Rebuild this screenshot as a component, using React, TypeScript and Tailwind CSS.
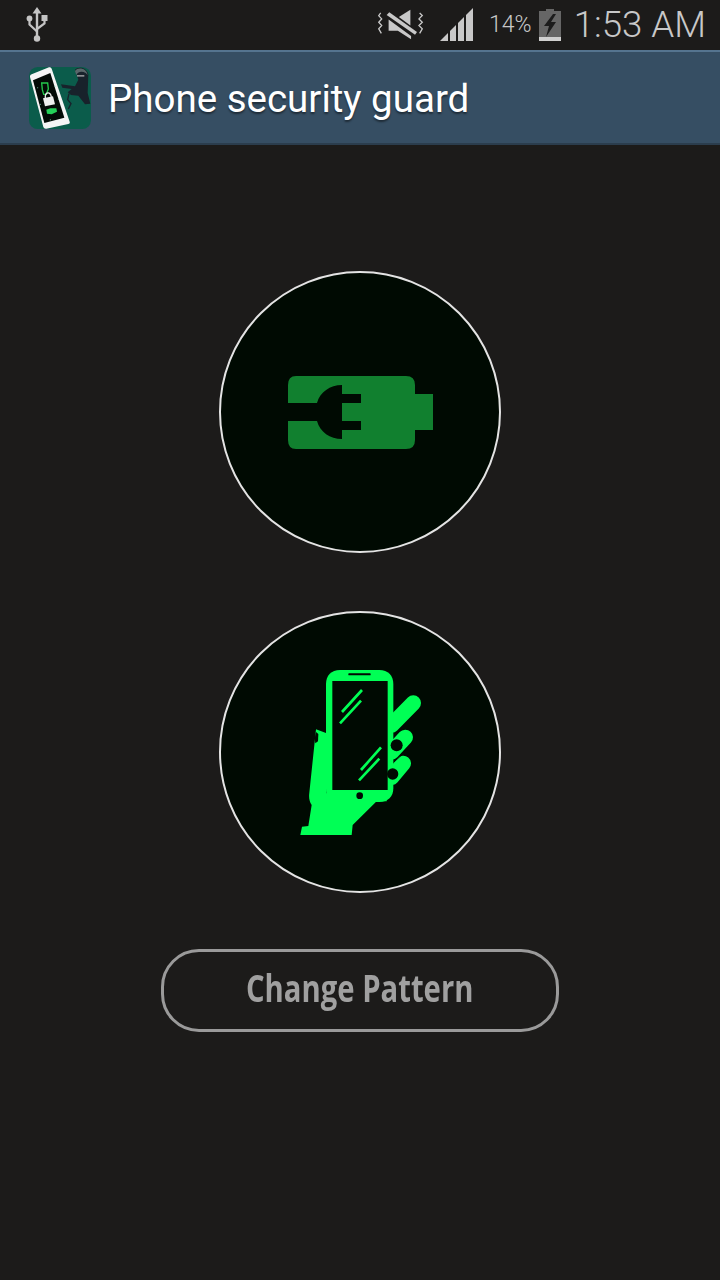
const ROBOTO = 'font-["Roboto",sans-serif]';

function UsbIcon() {
  return (
    <svg width="22" height="36" viewBox="0 0 22 36" fill="none" className="text-[#c4c4c4]">
      <path d="M11 3V31" stroke="currentColor" strokeWidth="2.4" />
      <path d="M11 0L15.5 6.5H6.5Z" fill="currentColor" />
      <circle cx="11" cy="31.5" r="3.2" fill="currentColor" />
      <circle cx="3.5" cy="11.5" r="2.9" fill="currentColor" />
      <rect x="15.5" y="8" width="6" height="6" fill="currentColor" />
      <path d="M3.5 13V17.5L11 24.5M18.5 13V16.5L11 22" stroke="currentColor" strokeWidth="2.2" />
    </svg>
  );
}

function VibrateOffIcon() {
  return (
    <svg width="47" height="33" viewBox="10 15 140 100" className="text-[#c8c8c8]">
      <path d="M75 42L110 20V68Z" fill="currentColor" />
      <path d="M38 36L46 28L130 88L124 96Z" fill="currentColor" />
      <path d="M44 50L112 100V110L72 84H44Z" fill="currentColor" />
      <path
        d="M20 30L14 38L23 48L14 58L23 68L14 78L22 92M138 30L146 38L136 48L146 58L136 68L146 78L138 92"
        fill="none"
        stroke="currentColor"
        strokeWidth="4"
      />
    </svg>
  );
}

function SignalIcon() {
  return (
    <svg width="33" height="33" viewBox="0 0 33 33" className="text-[#c8c8c8]">
      <path d="M0 33L8 25V33Z" fill="currentColor" />
      <path d="M10 23L16 17V33H10Z" fill="currentColor" />
      <path d="M18 15L24 9V33H18Z" fill="currentColor" />
      <path d="M26 7L33 0V33H26Z" fill="currentColor" />
    </svg>
  );
}

function BatteryIcon() {
  return (
    <svg width="22" height="32" viewBox="0 0 22 32">
      <rect x="7" y="0" width="8" height="3" fill="#666666" />
      <rect x="0" y="2" width="22" height="26" fill="#666666" />
      <rect x="0" y="28" width="22" height="4" fill="#d0d0d0" />
      <path d="M14 5L5 17H10L7 28L17 13H12L17 5Z" fill="#1c1c1c" />
    </svg>
  );
}

function AppLogo() {
  return (
    <svg width="62" height="62" viewBox="12 12 186 186" className="shrink-0">
      <rect x="12" y="12" width="186" height="186" rx="26" fill="#0b5c4b" />
      {/* thief */}
      <path
        d="M150 20C160 10 184 12 190 34L188 90L196 122L180 124L160 98L138 96L128 88L140 78L112 74L108 64L150 70L160 50Z"
        fill="#18222b"
      />
      <path d="M150 24C158 12 184 14 188 36L182 30C172 24 160 24 154 36Z" fill="#59676a" />
      <rect x="156" y="36" width="22" height="5" fill="#8d8f92" />
      <path d="M132 92L128 110L138 122L130 138" stroke="#18222b" strokeWidth="4" fill="none" />
      {/* phone */}
      <path
        d="M15 42Q14 36 20 34L72 13Q78 11 80 17L134 176Q136 182 130 183L64 197Q57 198 55 192Z"
        fill="#f5f5f5"
      />
      <path d="M24 52L76 30L118 164L58 180Z" fill="#040b07" />
      <path d="M50 60H68L70 78L64 94H56L52 80Z" fill="none" stroke="#24c94c" strokeWidth="4" />
      <path d="M54 106L84 100L90 124L60 130Z" fill="#eeeeee" />
      <path d="M61 106C59 86 77 84 79 102" fill="none" stroke="#eeeeee" strokeWidth="4" />
      <path d="M64 140L76 136L94 136L96 146L80 154L66 152Z" fill="#24d058" />
      <circle cx="38" cy="74" r="1.5" fill="#88ddbb" />
      <circle cx="90" cy="70" r="1.5" fill="#88ddbb" />
      <circle cx="46" cy="124" r="1.5" fill="#88ddbb" />
      <circle cx="100" cy="108" r="1.5" fill="#88ddbb" />
      <circle cx="76" cy="170" r="1.5" fill="#88ddbb" />
    </svg>
  );
}

function ChargeIcon() {
  return (
    <svg width="145" height="73" viewBox="0 0 145 73" className="mt-[1px] text-[#11802f]">
      <path
        fill="currentColor"
        d="M8 0H118Q127 0 127 9V18H145V54H127V64Q127 73 118 73H8Q0 73 0 64V45H29C32 56 42 63 54 63V54H73V45H54V27H73V18H54V9C42 9 32 16 29 27H0V9Q0 0 8 0Z"
      />
    </svg>
  );
}

function HandIcon() {
  return (
    <svg width="160" height="180" viewBox="0 0 480 540" className="mb-[4px] text-[#00ff55]">
      {/* fingers */}
      <path d="M335 195L400 129" stroke="currentColor" strokeWidth="46" strokeLinecap="round" />
      <path d="M335 276L376 232" stroke="currentColor" strokeWidth="46" strokeLinecap="round" />
      <path d="M335 352L370 310" stroke="currentColor" strokeWidth="46" strokeLinecap="round" />
      <path d="M342 226L372 198M342 306L368 282" stroke="#000a02" strokeWidth="3" />
      {/* palm and wrist */}
      <path
        fill="currentColor"
        d="M108 208L140 220V400H320V424H290L218 495L215 525H61L66 500L85 498L95 435C88 425 86 412 88 398Z"
      />
      <path d="M108 216C104 228 104 240 106 250L114 244L115 222Z" fill="#000a02" />
      {/* phone */}
      <path
        fill="currentColor"
        d="M138 72C138 46 154 30 180 30H298C324 30 340 46 340 72V385C340 410 324 426 298 426H180C154 426 138 410 138 385Z"
      />
      <rect x="157" y="63" width="166" height="327" fill="#000a02" />
      <rect x="205" y="40" width="67" height="6" rx="2" fill="#000a02" />
      <circle cx="239" cy="407" r="10" fill="#000a02" />
      {/* nails sit over the phone edge */}
      <circle cx="350" cy="256" r="18" fill="#000a02" />
      <circle cx="338" cy="342" r="17" fill="#000a02" />
      {/* glass glare */}
      <path
        d="M186 156L246 90M180 190L243 122M243 330L303 262M237 361L298 296"
        stroke="currentColor"
        strokeWidth="8"
      />
    </svg>
  );
}

function RoundButton({ children }: { children: React.ReactNode }) {
  return (
    <button className="flex h-[282px] w-[282px] items-center justify-center rounded-full border-2 border-[#e4e4e4] bg-[#000a02]">
      {children}
    </button>
  );
}

export default function App() {
  return (
    <div className="flex h-[1280px] w-[720px] flex-col overflow-hidden bg-[#1c1b1a]">
      {/* status bar */}
      <div className={`flex h-[50px] items-center pl-[26px] pr-[14px] text-[#c8c8c8] ${ROBOTO}`}>
        <UsbIcon />
        <div className="ml-auto flex items-center">
          <VibrateOffIcon />
          <div className="ml-[16px]">
            <SignalIcon />
          </div>
          <span className="ml-[16px] text-[23px] font-light leading-none">14%</span>
          <div className="ml-[7px]">
            <BatteryIcon />
          </div>
          <span className="ml-[13px] text-[36.7px] font-light leading-none">1:53 AM</span>
        </div>
      </div>

      {/* action bar */}
      <div className="flex h-[95px] items-center border-t-2 border-b-2 border-t-[#55748f] border-b-[#2b3d4d] bg-[#364e63] pl-[29px]">
        <AppLogo />
        <h1 className={`ml-[17px] mt-[3px] text-[38.5px] font-normal text-white [text-shadow:0_2px_2px_rgba(0,0,0,0.45)] ${ROBOTO}`}>
          Phone security guard
        </h1>
      </div>

      {/* main */}
      <div className="flex flex-col items-center pt-[126px]">
        <RoundButton>
          <ChargeIcon />
        </RoundButton>
        <div className="mt-[58px]">
          <RoundButton>
            <HandIcon />
          </RoundButton>
        </div>
        <button className="mt-[56px] flex h-[83px] w-[398px] items-center justify-center rounded-[38px] border-[3.5px] border-[#9a9a9a] pb-[6px] blur-[0.6px]">
          <span className="inline-block scale-x-[0.77] whitespace-nowrap font-['Open_Sans',sans-serif] text-[38px] font-bold text-[#a0a0a0]">
            Change Pattern
          </span>
        </button>
      </div>
    </div>
  );
}
